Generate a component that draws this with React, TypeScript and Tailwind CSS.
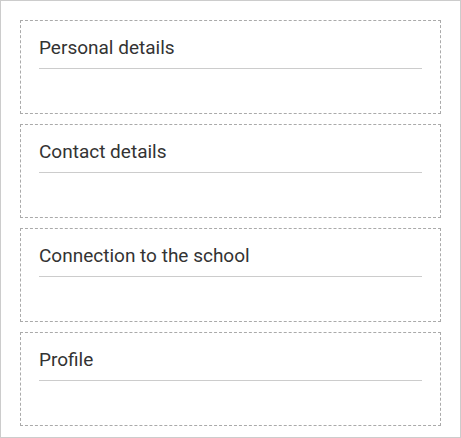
import React from "react";

const sections = ["Personal details", "Contact details", "Connection to the school", "Profile"];

export default function App() {
  return (
    <div className="w-[461px] h-[438px] border border-[#cccccc] bg-white pt-[19px] px-[19px] flex flex-col gap-[10px]" style={{ fontFamily: "Roboto, 'Liberation Sans', sans-serif" }}>
      {sections.map((s) => (
        <div key={s} className="h-[94px] border border-dashed border-[#aaaaaa] px-[18px] pt-[16px]">
          <h2 className="text-[19px] leading-[22px] font-normal text-[#333333] pb-[9px] border-b border-[#cccccc]">{s}</h2>
        </div>
      ))}
    </div>
  );
}
